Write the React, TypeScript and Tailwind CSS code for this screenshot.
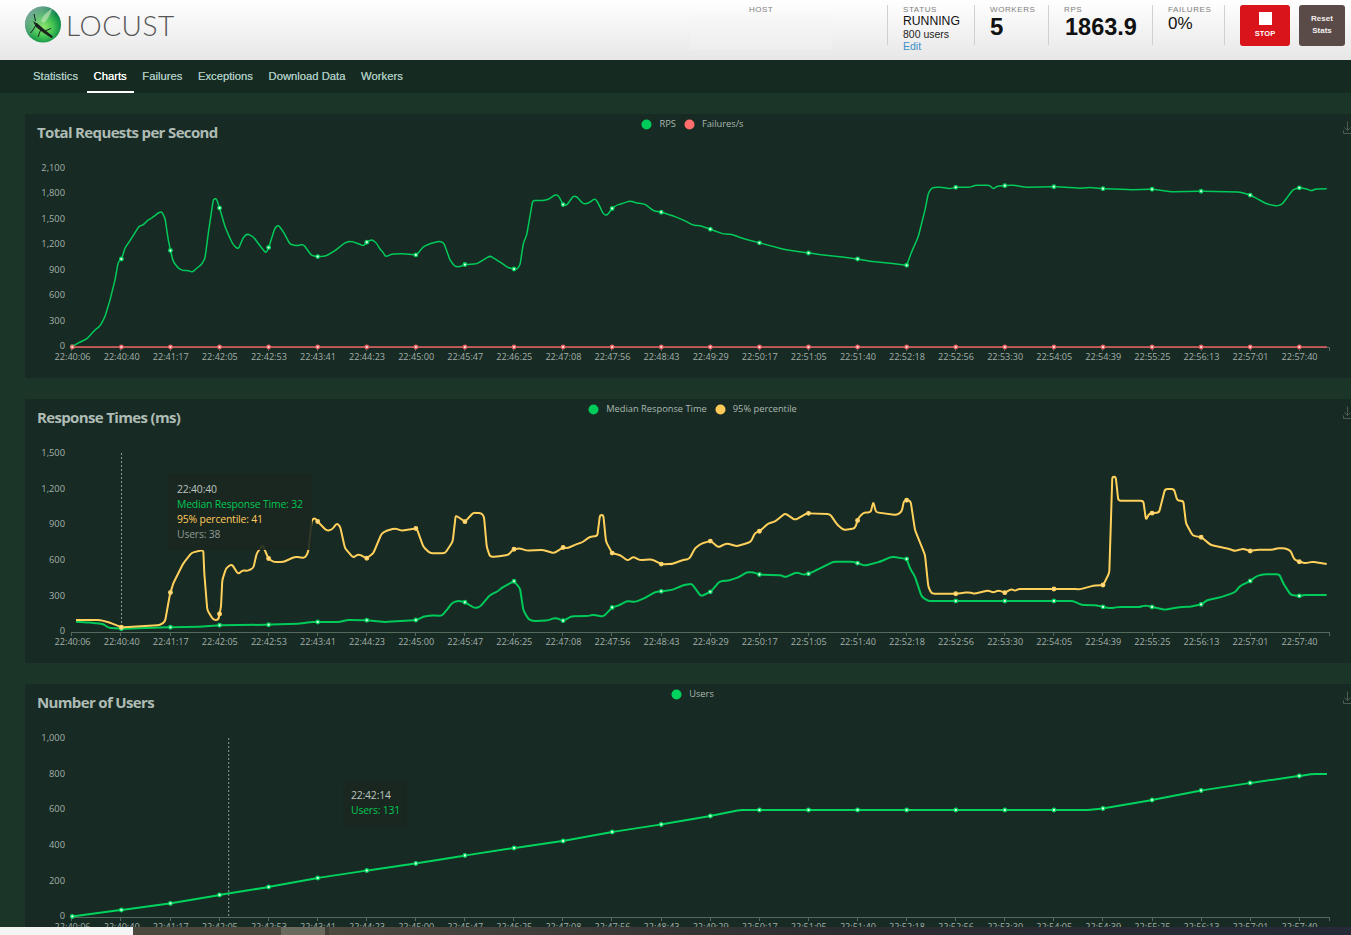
import React from 'react';

type P = [number, number];

const LABELS = ['22:40:06','22:40:40','22:41:17','22:42:05','22:42:53','22:43:41','22:44:23','22:45:00','22:45:47','22:46:25','22:47:08','22:47:56','22:48:43','22:49:29','22:50:17','22:51:05','22:51:40','22:52:18','22:52:56','22:53:30','22:54:05','22:54:39','22:55:25','22:56:13','22:57:01','22:57:40'];

const GREEN = '#00ca5a';
const RED = '#e65f5f';
const YELLOW = '#ffd15c';

// traced from the reference, page coordinates
const rps: P[] = [[72.3,346.7],[78,343],[86.7,339],[95,330],[100,326],[105,316.7],[110,300],[115,280],[118.3,261.7],[121.7,258.7],[125,248],[131.7,238],[139.3,225.7],[143.3,225.3],[146.7,221],[153.3,217],[158.3,212.7],[161.7,211.7],[165,218],[168.3,240],[170.7,251.7],[173.3,261.7],[178.3,268.3],[183.3,270.7],[188.3,270.3],[192.3,272.3],[196.7,268.3],[201.7,264.3],[205,258.3],[208.3,233.3],[213.3,199.3],[216.3,198.3],[220,209.3],[225,226.7],[230,238.3],[233.3,245],[238.3,249.3],[243.3,237.3],[247.3,233.7],[253.3,236.7],[260,245.7],[266,253.3],[269,246.7],[275,227.7],[278.3,225],[283.3,231.7],[290,244.3],[296.7,245.7],[303.3,244.3],[311.7,255.7],[318.3,256.7],[326,256],[335,250.7],[345,242.7],[350.7,241],[360,244.3],[363.3,246],[366.7,242.3],[371.7,239.3],[376.7,243.3],[380,249.3],[382.7,251.7],[385.7,257],[391.7,254],[403.3,253.7],[416.7,255],[423.3,246.7],[430,243.7],[440,241],[444,243.3],[450,260],[455,266.7],[460,266.7],[465,264.5],[476.7,264],[490,255.7],[501.7,263.3],[508.3,267.7],[516.7,269.7],[520,265],[523.3,243.3],[526.7,235],[532.7,200.3],[540,200.7],[548.3,199.7],[555,194.7],[558.3,195.3],[563.3,205],[566.7,205.3],[573.3,196],[576.7,196.7],[583.3,204],[588.3,203.3],[595,198.3],[598.3,203.3],[603.3,214],[606.7,215.7],[612.3,208.3],[616.7,205],[623.3,203.3],[630,200.7],[636.7,203],[645,204],[653.3,210.7],[661.7,212.3],[673.3,216],[683.3,220],[693.3,225.3],[700,225.7],[710.7,229.3],[723.3,234],[731.7,234.3],[743.3,238.7],[760,243],[785,249.7],[809,253],[823.3,255],[840,256.7],[857.7,259],[870,261.3],[890,263.3],[906.7,265.3],[911.7,251.7],[918.3,236.7],[925,210],[928.3,193.3],[931.7,187.7],[940,187],[950,188.7],[956,187.3],[970,187.3],[975,185.3],[990,185.3],[993.3,189.3],[996.7,186.3],[1013.3,185],[1025,187.3],[1054,186.7],[1068,187.3],[1080,188.3],[1090,187.5],[1103.3,188.7],[1130,189.7],[1152.3,189.3],[1171.7,191.7],[1201.7,191.3],[1240,192],[1250.7,195.3],[1258.3,199.3],[1266.7,204],[1276.7,206],[1281.7,204.7],[1288.3,196],[1293.3,189.3],[1300,187.7],[1306.7,189],[1311.7,191],[1315,189],[1326.7,188.7]];

const failures: P[] = [[72,347],[1327,347]];

const p95: P[] = [[76,620],[100,620],[110,622.7],[121.7,627.3],[160,625],[165,621.7],[170,594],[173.3,583.3],[178.3,573.3],[183.3,563.3],[191.7,552.7],[203.3,550],[204.3,573.3],[207.3,610],[213.3,620],[218.3,620],[221,606.7],[222.3,580],[226,568.3],[231.7,564],[238.3,574.3],[242.7,570],[246.7,571],[253.3,568.3],[256.7,553.3],[262.7,545],[268.3,558.3],[273.3,562],[283.3,562],[295,556.7],[305,558],[308.3,551.7],[311.7,520],[315,517.7],[318.3,522.3],[326.7,530.7],[331.7,530],[336.7,523.3],[340,526],[345,548.3],[353.3,557.7],[358.3,554],[366.7,558.3],[373.3,553.3],[381.7,533.3],[386.7,530.7],[395,528.3],[401.7,530.7],[416.7,528.3],[423.3,546.7],[430,553.3],[445,553.3],[452.7,541.7],[455.7,515.3],[465,521.7],[473.3,512.7],[481.7,513.3],[484,516.7],[486.7,546.7],[490,556.7],[496.7,556.7],[508.3,555],[513.3,549.3],[520,548.3],[526.7,550.7],[543.3,550],[554,553.3],[563.3,547.3],[567.3,548.3],[576.7,544],[581.7,542.7],[590,536.7],[597.3,536],[600,515],[603.3,515],[606,541.7],[612.3,553.3],[620,555],[627.7,560.7],[633.3,556.7],[640,560.3],[651.7,559.3],[661.7,564.3],[671.7,564],[683.3,560],[689.3,559],[695,548.3],[701.7,543.3],[710.7,541],[718.3,547.3],[726.7,543.3],[736.7,546.3],[746.7,543.3],[751,541.7],[755,532.7],[760,531],[768.3,523.3],[775,521.7],[785,513.3],[795,520],[806.7,513.3],[830,514],[836.7,524],[843.3,530],[855,528.3],[858.3,518.3],[863.3,512.7],[870.7,512.3],[873.3,501.7],[876,512.3],[896.7,515],[901.7,511.7],[904,500.7],[908.3,500],[910.7,501.7],[915,530],[925,555],[928.3,586.7],[931.7,593.7],[956,593.7],[968.3,592.3],[975,593.7],[988.3,590.3],[993.3,592.7],[998.3,590.3],[1005,592.7],[1011.7,589],[1015,591],[1018.3,589],[1073.3,589],[1080,589.3],[1093.3,585.7],[1103.3,585],[1109.3,572.7],[1112.3,476.7],[1115.7,476.7],[1118.3,500.7],[1143.3,500.7],[1146,520],[1149.3,513.3],[1159,512.7],[1165,489],[1174,489],[1177.3,500.7],[1183.3,500.7],[1186,523.3],[1192.7,535.7],[1201.7,537.3],[1210.7,545],[1228.3,548.7],[1235,551],[1243.3,548.7],[1250,551],[1256.7,549.7],[1273.3,549.7],[1276.7,548.3],[1285,548.3],[1290.7,550.7],[1294,559.3],[1300,562],[1306,563.3],[1311.7,561.7],[1326.7,564]];

const median: P[] = [[76,621.7],[86.7,622.3],[103.3,624],[108.3,627.7],[121.7,628.7],[170,627.3],[200,626.7],[219.3,625.3],[268.3,624.7],[300,623.7],[310,622],[340,622],[346.7,620],[366.7,620.3],[385,622],[416.7,620],[423.3,616.7],[431.7,615.3],[441.7,616],[446.7,610],[452.3,602.7],[458.3,600.7],[465,602.3],[475,608.3],[480,606.7],[490,595],[498.3,591],[501.7,587.7],[514,581.3],[520,588.3],[523.3,610],[528.3,619.3],[533.3,621],[548.3,620.3],[555,617.7],[563.3,620.7],[571.7,616.3],[588.3,616],[593.3,614.7],[603.3,616.7],[612.3,607.3],[620,605],[626.7,601],[635,602],[645,598],[655,592],[661.7,591.3],[671.7,590],[683.3,585.3],[691.7,583.7],[701,596.3],[710.7,591.7],[720,581],[728.3,580.7],[738.3,577.3],[746.7,572.3],[753.3,572.3],[760,574.7],[781.7,575.3],[785,577.3],[796.7,572.3],[803.3,574.7],[809,573.7],[816.7,570],[833.3,561.7],[853.3,561.7],[865,565.7],[880,561.7],[891.7,556.7],[906.7,559],[910,568.3],[915,576.7],[921.7,596.7],[928.3,601],[1073.3,601],[1081.7,605],[1096.7,605.3],[1103.3,607],[1110,608.3],[1118.3,607],[1140,607],[1145,605.3],[1152.3,607],[1165,609.7],[1180,607],[1190,606.7],[1201.7,604.3],[1206.7,600.3],[1221.7,597],[1235,592.3],[1240,586],[1250.7,580.7],[1256.7,576],[1263.3,574.3],[1279.3,574.3],[1283.3,583.3],[1290.7,595],[1300,596],[1303.3,595],[1326.7,595]];

const users: P[] = [[72,916.5],[121,910],[170,903.5],[219.5,895],[268.5,887],[317.5,878],[367,870.5],[416,863.5],[465,855.5],[514,848],[563,841],[612,832],[661,824.5],[710,816],[740,810],[1088,810],[1103,808.5],[1152,800],[1201,790.5],[1250,783],[1299,776],[1313,774],[1327,774]];

// rounds each corner only by a few px so long flat runs keep their sharp ends
const toPath = (pts: P[]) => {
  let d = `M${pts[0][0]} ${pts[0][1]}`;
  for (let i = 1; i < pts.length - 1; i++) {
    const [x, y] = pts[i];
    const [ax, ay] = pts[i - 1];
    const [bx, by] = pts[i + 1];
    const la = Math.hypot(ax - x, ay - y);
    const lb = Math.hypot(bx - x, by - y);
    const ra = Math.min(2.5, la / 2) / la;
    const rb = Math.min(2.5, lb / 2) / lb;
    d += ` L${x + (ax - x) * ra} ${y + (ay - y) * ra} Q${x} ${y} ${x + (bx - x) * rb} ${y + (by - y) * rb}`;
  }
  const last = pts[pts.length - 1];
  return `${d} L${last[0]} ${last[1]}`;
};

const yAt = (pts: P[], x: number) => {
  for (let i = 1; i < pts.length; i++) {
    if (x <= pts[i][0]) {
      const [x0, y0] = pts[i - 1];
      const [x1, y1] = pts[i];
      return y0 + ((y1 - y0) * (x - x0)) / (x1 - x0);
    }
  }
  return pts[pts.length - 1][1];
};

interface Series {
  name: string;
  color: string;
  dot: string;
  width: number;
  points: P[];
}

interface ChartCardProps {
  title: string;
  top: number;
  axisY: number;
  ticks: string[];
  firstTickY: number;
  tickStep: number;
  series: Series[];
  cursorX?: number;
  children?: React.ReactNode;
}

const ChartCard = ({ title, top, axisY, ticks, firstTickY, tickStep, series, cursorX, children }: ChartCardProps) => (
  <div className="relative w-[1336px] h-[264px] shrink-0 bg-[#172a23] rounded-[2px]">
    <div className="grid grid-cols-[1fr_auto_1fr] h-[40px]">
      <h2 className="pl-[12px] pt-[7px] text-[15px] leading-[22px] font-bold text-[#aebcb5] font-['Open_Sans',sans-serif] tracking-[-0.65px]">{title}</h2>
      <div className="flex items-start pt-[4px] gap-[7px]">
        {series.map((s) => (
          <div key={s.name} className="flex items-center h-[12px] mr-[1px]">
            <svg width="11" height="11" viewBox="0 0 11 11" className="mr-[7px]">
              <circle cx="5.5" cy="5.5" r="5" fill={s.name === 'Failures/s' ? '#ff6d6d' : s.color === YELLOW ? '#ffca5a' : s.color} />
            </svg>
            <span className="text-[9.3px] leading-[12px] text-[#aab8b1] font-['Open_Sans',sans-serif]">{s.name}</span>
          </div>
        ))}
      </div>
      <div className="flex justify-end pr-[9px] pt-[7px]">
        <svg width="9" height="13" viewBox="0 0 9 13" fill="none" stroke="#4a5c54" strokeWidth="1">
          <path d="M4.5 0.5v9M1.5 6.5l3 3 3-3M0.5 9.5v3h8v-3" />
        </svg>
      </div>
    </div>
    <svg width="1336" height="224" viewBox={`25 ${top + 40} 1336 224`} className="block">
      {ticks.map((t, i) => (
        <text key={t} x="65" y={firstTickY + tickStep * i + 3.5} textAnchor="end" fontSize="9.3" fill="#a3b0aa" fontFamily="'Open Sans', sans-serif">{t}</text>
      ))}
      <line x1="71" x2="1329.5" y1={axisY + 0.5} y2={axisY + 0.5} stroke="#56695f" />
      {LABELS.map((l, i) => {
        const x = Math.round(71.3 + 49.1 * i) + 0.5;
        return <line key={l} x1={x} x2={x} y1={axisY} y2={axisY + 4} stroke="#56695f" />;
      })}
      <line x1="1329.5" x2="1329.5" y1={axisY} y2={axisY + 4} stroke="#56695f" />
      {LABELS.map((l, i) => (
        <text key={l} x={72.6 + 49.08 * i} y={axisY + 13} textAnchor="middle" fontSize="9.1" fill="#a3b0aa" fontFamily="'Open Sans', sans-serif">{l}</text>
      ))}
      {cursorX !== undefined && (
        <line x1={cursorX} x2={cursorX} y1={top + 54} y2={axisY} stroke="#8d9c95" strokeDasharray="2 2" />
      )}
      {series.map((s) => (
        <g key={s.name}>
          <path d={toPath(s.points)} fill="none" stroke={s.color} strokeWidth={s.width} strokeLinejoin="round" />
          {LABELS.map((l, i) => {
            const x = 72.3 + 49.08 * i;
            if (x < s.points[0][0]) return null;
            return <circle key={l} cx={x} cy={yAt(s.points, x)} r="1.8" fill={s.dot} stroke={s.color} strokeWidth="1.3" />;
          })}
        </g>
      ))}
    </svg>
    {children}
  </div>
);

const StatCol = ({ label, width, children }: { label: string; width: string; children: React.ReactNode }) => (
  <div className={`${width} h-[40px] border-l border-[#d0d0d0] pl-[15px] font-['Liberation_Sans',Arial,sans-serif]`}>
    <div className="text-[8px] leading-[9px] tracking-[0.6px] text-[#808080] uppercase">{label}</div>
    {children}
  </div>
);

const Logo = () => (
  <svg width="38" height="37" viewBox="0 0 38 37" className="shrink-0">
    <defs>
      <radialGradient id="orb" cx="52%" cy="58%" r="58%">
        <stop offset="0%" stopColor="#8fe86a" />
        <stop offset="45%" stopColor="#45c454" />
        <stop offset="85%" stopColor="#0c8a45" />
        <stop offset="100%" stopColor="#0a6d5a" />
      </radialGradient>
      <linearGradient id="sheen" x1="0" y1="0" x2="1" y2="1">
        <stop offset="0%" stopColor="#9fb5b0" stopOpacity="0.95" />
        <stop offset="55%" stopColor="#c9d8d4" stopOpacity="0" />
      </linearGradient>
    </defs>
    <circle cx="19" cy="18.5" r="18" fill="url(#orb)" />
    <circle cx="19" cy="18.5" r="18" fill="url(#sheen)" />
    <path d="M17 15C19 9 24 5 28 2.5C27 8 24 13 20 17Z" fill="#d7ecc9" opacity="0.55" />
    <path d="M9 15L14 18L21 24L29 30.5L27.5 32L19 26.5L12 21Z" fill="#1a231e" />
    <path d="M10 8L11.5 15M13 17L9 24L6.5 27M17 23L14 31M21 25L27 22.5" stroke="#1a231e" strokeWidth="1" fill="none" />
  </svg>
);

export default function App() {
  return (
    <div className="w-full h-[935px] overflow-hidden flex flex-col bg-[#1b3529]">
      <header className="h-[60px] shrink-0 flex items-start bg-gradient-to-b from-[#ffffff] to-[#e7e7e7]">
        <div className="flex items-center pl-[24px] pt-[6px]">
          <Logo />
          <span className="ml-[4px] text-[28px] leading-[36px] font-light text-[#555555] tracking-[0.5px] font-['Lato',sans-serif]">LOCUST</span>
        </div>
        <div className="ml-auto flex items-start pt-[5px] pr-[6px]">
          <div className="w-[197px] h-[40px] pr-[55px]">
            <div className="text-[8px] leading-[9px] tracking-[0.5px] text-[#808080] text-center font-['Liberation_Sans',Arial,sans-serif]">HOST</div>
            <div className="h-[36px] bg-[#f5f5f5]/30" />
          </div>
          <StatCol label="Status" width="w-[87px]">
            <div className="text-[12.2px] leading-[15px] text-[#111111]">RUNNING</div>
            <div className="text-[10.5px] leading-[13px] mt-[-1px] text-[#222222]">800 users</div>
            <div className="text-[10.5px] leading-[11px] text-[#3a8fc8]">Edit</div>
          </StatCol>
          <StatCol label="Workers" width="w-[74px]">
            <div className="text-[24px] leading-[26px] font-bold text-[#111111]">5</div>
          </StatCol>
          <StatCol label="RPS" width="w-[104px]">
            <div className="text-[23.5px] leading-[26px] pl-[1px] font-bold text-[#111111]">1863.9</div>
          </StatCol>
          <StatCol label="Failures" width="w-[72px]">
            <div className="text-[17px] leading-[20px] font-normal text-[#111111]">0%</div>
          </StatCol>
          <div className="border-l border-[#d0d0d0] h-[40px] mr-[15px]" />
          <button className="w-[50px] h-[41px] rounded-[3px] bg-[#d9141a] flex flex-col items-center pt-[7px] font-['Liberation_Sans',Arial,sans-serif]">
            <span className="w-[13px] h-[13px] bg-white" />
            <span className="text-[7.5px] leading-[9px] mt-[4px] font-bold text-white">STOP</span>
          </button>
          <button className="ml-[9px] w-[46px] h-[41px] rounded-[3px] bg-[#5a4b49] pb-[2px] text-[8px] leading-[12px] font-bold text-[#f2eeee] font-['Liberation_Sans',Arial,sans-serif]">
            Reset<br />Stats
          </button>
        </div>
      </header>

      <nav className="h-[33px] shrink-0 flex pl-[26px] gap-[1.6px] bg-[#152b22] text-[11.25px] text-[#a9c6bf] font-['Liberation_Sans',Arial,sans-serif] [text-shadow:0_0_0.6px_currentColor]">
        <a className="px-[7px] pt-[9px] leading-[14px]">Statistics</a>
        <a className="px-[7px] pt-[9px] leading-[14px] text-white border-b-2 border-white">Charts</a>
        <a className="px-[7px] pt-[9px] leading-[14px]">Failures</a>
        <a className="px-[7px] pt-[9px] leading-[14px]">Exceptions</a>
        <a className="px-[7px] pt-[9px] leading-[14px]">Download Data</a>
        <a className="px-[7px] pt-[9px] leading-[14px]">Workers</a>
      </nav>

      <main className="flex-1 min-h-0 overflow-hidden flex flex-col gap-[21px] pt-[21px] pl-[25px]">
        <ChartCard
          title="Total Requests per Second"
          top={114}
          axisY={347}
          ticks={['2,100','1,800','1,500','1,200','900','600','300','0']}
          firstTickY={167}
          tickStep={25.55}
          series={[
            { name: 'RPS', color: GREEN, dot: '#e8fff0', width: 1.5, points: rps },
            { name: 'Failures/s', color: RED, dot: '#ffd9d9', width: 1.6, points: failures },
          ]}
        />
        <ChartCard
          title="Response Times (ms)"
          top={399}
          axisY={632}
          ticks={['1,500','1,200','900','600','300','0']}
          firstTickY={452.3}
          tickStep={35.7}
          cursorX={121.5}
          series={[
            { name: 'Median Response Time', color: GREEN, dot: '#e8fff0', width: 2, points: median },
            { name: '95% percentile', color: YELLOW, dot: '#ffdca0', width: 2, points: p95 },
          ]}
        >
          <div className="absolute left-[143px] top-[75px] w-[144px] h-[76px] px-[9px] pt-[8px] rounded-[3px] bg-[#1b2720]/90 whitespace-nowrap text-[10.4px] leading-[15px] font-['Open_Sans',sans-serif] tracking-[-0.17px]">
            <div className="text-[#bcc5c0]">22:40:40</div>
            <div className="text-[#00c853]">Median Response Time: 32</div>
            <div className="text-[#ffca5a]">95% percentile: 41</div>
            <div className="text-[#8e9a94]">Users: 38</div>
          </div>
        </ChartCard>
        <ChartCard
          title="Number of Users"
          top={684}
          axisY={917}
          ticks={['1,000','800','600','400','200','0']}
          firstTickY={737.3}
          tickStep={35.7}
          cursorX={228.7}
          series={[{ name: 'Users', color: '#00d45e', dot: '#e8fff0', width: 2, points: users }]}
        >
          <div className="absolute left-[318px] top-[96px] w-[64px] h-[47px] px-[8px] pt-[8px] rounded-[3px] bg-[#1b2720]/90 whitespace-nowrap text-[10.4px] leading-[15px] font-['Open_Sans',sans-serif] tracking-[-0.17px]">
            <div className="text-[#bcc5c0]">22:42:14</div>
            <div className="text-[#00c853]">Users: 131</div>
          </div>
        </ChartCard>
      </main>

      <div className="h-[8px] shrink-0 flex">
        <div className="w-[133px] bg-[#f4f4f4]" />
        <div className="w-[148px] bg-[#4b483e]" />
        <div className="w-[44px] bg-[#6b6a5e]" />
        <div className="w-[4px] bg-[#3f3d36]" />
        <div className="flex-1 bg-gradient-to-r from-[#4d4a40] via-[#2c2c30] to-[#252a36]" />
      </div>
    </div>
  );
}
